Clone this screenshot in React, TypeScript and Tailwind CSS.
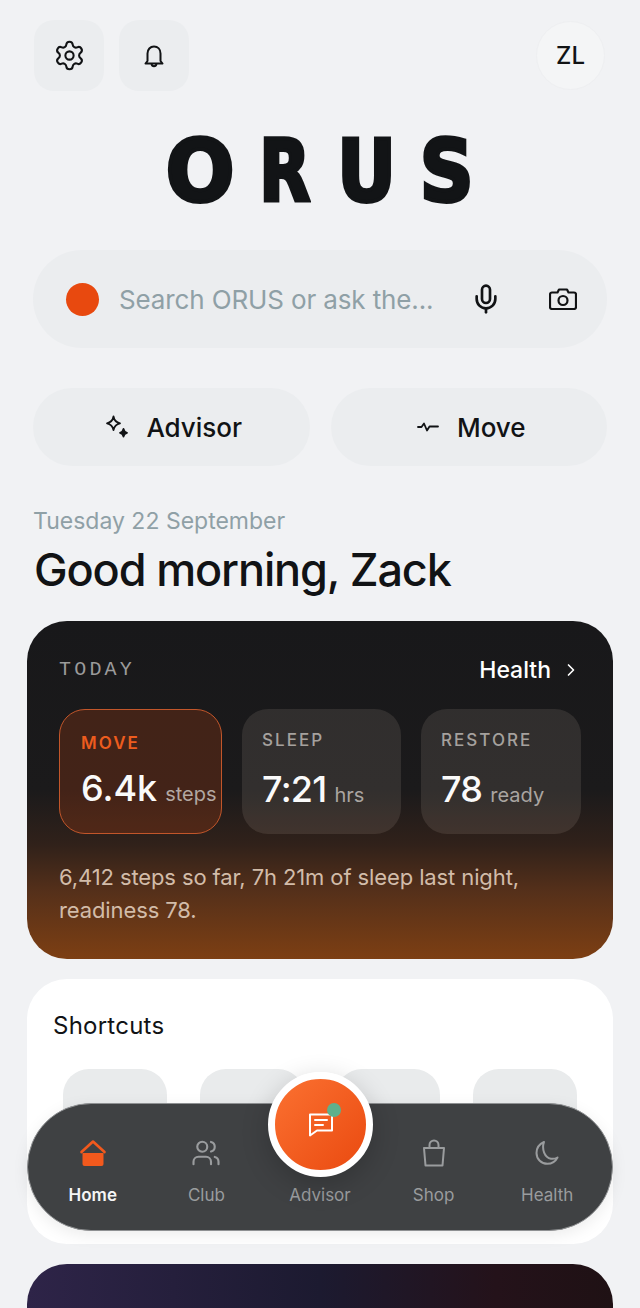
import { ChevronRight, Mic, Settings, Users } from "lucide-react";

const stats = [
  { label: "SLEEP", value: "7:21", unit: "hrs", width: "w-[159px]" },
  { label: "RESTORE", value: "78", unit: "ready", width: "w-[160px]" },
];

const SparkIcon = () => (
  <svg width="26" height="26" viewBox="0 0 26 26" fill="none" stroke="#111315" strokeWidth="1.8" strokeLinejoin="round">
    <path d="M9.500 2.500c.8 4.200 2.500 6 6.500 6.800-4 .8-5.700 2.600-6.500 6.800-.8-4.200-2.500-6-6.500-6.800 4-.8 5.700-2.600 6.500-6.800Z" />
    <path d="M19.500 15c.4 2.400 1.300 3.300 3.500 3.800-2.200.5-3.100 1.400-3.500 3.700-.4-2.300-1.300-3.200-3.500-3.700 2.200-.5 3.100-1.400 3.500-3.800Z" fill="#111315" />
  </svg>
);

const PulseIcon = () => (
  <svg width="24" height="24" viewBox="0 0 24 24" fill="none" stroke="#111315" strokeWidth="1.8" strokeLinecap="round" strokeLinejoin="round">
    <path d="M2 12h3.500L8 8.500l3 7 2.500-4H22" />
  </svg>
);

const BellIcon = () => (
  <svg width="26" height="26" viewBox="0 0 26 26" fill="none" stroke="#111315" strokeWidth="2" strokeLinejoin="round">
    <path d="M6.500 18V10.500C6.500 6.400 9.200 3.500 13 3.500s6.500 2.900 6.500 7V18l2 2.500h-17l2-2.500Z" />
    <path d="M10.500 21c.3 1.500 1.200 2.200 2.500 2.200s2.200-.7 2.500-2.200" />
  </svg>
);

const CameraIcon = () => (
  <svg width="28" height="22" viewBox="0 0 28 22" fill="none" stroke="#111315" strokeWidth="2.200" strokeLinejoin="round">
    <path d="M3 4.500h5.500L10 1.500h8l1.500 3H25a2 2 0 0 1 2 2V19a2 2 0 0 1-2 2H3a2 2 0 0 1-2-2V6.500a2 2 0 0 1 2-2Z" />
    <circle cx="14" cy="12.500" r="4.500" />
  </svg>
);

const HomeIcon = () => (
  <svg width="28" height="28" viewBox="0 0 28 28" fill="none">
    <path d="M2.500 13 14 2.500 25.500 13" stroke="#f2591d" strokeWidth="2.600" strokeLinejoin="round" strokeLinecap="round" />
    <path d="M3.500 14h21v11a2 2 0 0 1-2 2h-17a2 2 0 0 1-2-2V14Z" fill="#f2591d" />
  </svg>
);

const BagIcon = () => (
  <svg width="28" height="30" viewBox="0 0 28 30" fill="none" stroke="#9a9c9e" strokeWidth="2" strokeLinejoin="round">
    <path d="M4 10h20l-1.500 17.500h-17L4 10Z" />
    <path d="M9.500 10V7a4.500 4.500 0 0 1 9 0v3" />
  </svg>
);

const MoonIcon = () => (
  <svg width="28" height="28" viewBox="0 0 28 28" fill="none" stroke="#9a9c9e" strokeWidth="2" strokeLinejoin="round">
    <path d="M11 3C6.500 5 3.500 9 3.500 14c0 6.200 5 10.800 10.800 10.800 4.400 0 8.200-2.400 10.200-6.300-2 1.200-4.200 1.600-6.500 1.200C11.500 18.500 8.500 10 11 3Z" />
  </svg>
);

const ChatIcon = () => (
  <svg width="28" height="28" viewBox="0 0 28 28" fill="none" stroke="#fff" strokeWidth="2" strokeLinejoin="round" strokeLinecap="round">
    <path d="M3 3.500h22v16H10l-7 5v-21Z" />
    <path d="M8 9h12M8 14h8" />
  </svg>
);

const navItems = [
  { label: "Home", icon: <HomeIcon />, active: true },
  { label: "Club", icon: <Users size={30} strokeWidth={1.7} color="#9a9c9e" /> },
  { label: "Advisor", icon: null },
  { label: "Shop", icon: <BagIcon /> },
  { label: "Health", icon: <MoonIcon /> },
];

const logoLetters = [
  { letter: "O", box: "w-[66px]", glyph: "scale-x-[0.95]" },
  { letter: "R", box: "ml-[27px] w-[49px]", glyph: "scale-x-[0.78]" },
  { letter: "U", box: "ml-[31px] w-[53px]", glyph: "scale-x-[0.85]" },
  { letter: "S", box: "ml-[27px] w-[53px]", glyph: "scale-x-[0.88]" },
];

export default function App() {
  return (
    <div className="relative h-[1308px] w-[640px] overflow-hidden bg-[#f1f2f4] font-['Inter',sans-serif] text-[#111315]">
      <header className="flex items-center justify-between pl-[34px] pr-[35px] pt-[20px]">
        <div className="flex gap-[15px]">
          <button className="flex h-[71px] w-[70px] items-center justify-center rounded-[20px] bg-[#ebedef]">
            <Settings size={33} strokeWidth={1.5} />
          </button>
          <button className="flex h-[71px] w-[70px] items-center justify-center rounded-[20px] bg-[#ebedef]">
            <BellIcon />
          </button>
        </div>
        <div className="flex h-[69px] w-[69px] items-center justify-center rounded-full border border-[#eeeff1] bg-[#f4f5f6] text-[24px] font-medium">ZL</div>
      </header>

      <div className="mt-[40px] flex h-[80px] items-center justify-center font-['DejaVu_Sans',sans-serif] text-[85px] font-bold leading-none text-[#121416] [-webkit-text-stroke:4px_#121416]">
        {logoLetters.map(({ letter, box, glyph }) => (
          <span key={letter} className={`flex justify-center ${box}`}>
            <span className={`inline-block ${glyph}`}>{letter}</span>
          </span>
        ))}
      </div>

      <div className="mx-[33px] mt-[39px] flex h-[98px] items-center rounded-full bg-[#ebedef] pl-[33px] pr-[30px]">
        <span className="h-[33px] w-[33px] rounded-full bg-[#e8490f]" />
        <span className="ml-[20px] flex-1 text-[26px] tracking-[-0.005em] text-[#8fa0a6]">Search ORUS or ask the...</span>
        <Mic size={32} strokeWidth={2} />
        <span className="ml-[47px]">
          <CameraIcon />
        </span>
      </div>

      <div className="mx-[33px] mt-[40px] grid grid-cols-2 gap-[21px]">
        <button className="flex h-[78px] items-center justify-center gap-[16px] rounded-full bg-[#ebedef] pl-[4px] text-[26px] font-medium">
          <SparkIcon /> Advisor
        </button>
        <button className="flex h-[78px] items-center justify-center gap-[17px] rounded-full bg-[#ebedef] pl-[4px] text-[26px] font-medium">
          <PulseIcon /> Move
        </button>
      </div>

      <div className="mx-[33px] mt-[41px] text-[23px] leading-[28px] text-[#8fa0a6]">Tuesday 22 September</div>
      <h1 className="mx-[34px] mt-[7px] text-[45px] font-medium leading-[56px] tracking-[-0.025em]">Good morning, Zack</h1>

      <section className="mx-[27px] mt-[23px] h-[338px] rounded-[40px] bg-[linear-gradient(180deg,#18181a_0%,#1b1a1b_50%,#30211a_66%,#55301a_80%,#7d3f13_100%)] px-[32px] pt-[32px]">
        <div className="flex items-center justify-between">
          <span className="font-['Liberation_Mono',monospace] text-[20px] tracking-[0.16em] text-[#9b9b9b]">TODAY</span>
          <span className="flex items-center gap-[10px] text-[23px] font-medium text-white">
            Health <ChevronRight size={20} strokeWidth={2} />
          </span>
        </div>
        <div className="mt-[21px] flex gap-[20px]">
          <div className="h-[125px] w-[163px] rounded-[26px] border border-[#c2562a] bg-[#e8490f]/[0.2] pl-[21px] pt-[22px]">
            <div className="text-[17px] font-semibold leading-[22px] tracking-[0.12em] text-[#ed5c1e]">MOVE</div>
            <div className="mt-[12px] flex items-baseline whitespace-nowrap">
              <span className="text-[36px] font-medium leading-[44px] text-[#fafafa]">6.4k</span>
              <span className="ml-[8px] text-[20px] text-[#b3a8a2]">steps</span>
            </div>
          </div>
          {stats.map((stat) => (
            <div key={stat.label} className={`h-[125px] ${stat.width} rounded-[26px] bg-[#ffe8d8]/[0.1] pl-[20px] pt-[20px]`}>
              <div className="text-[17px] font-medium leading-[22px] tracking-[0.12em] text-[#a5a19e]">{stat.label}</div>
              <div className="mt-[16px] flex items-baseline whitespace-nowrap">
                <span className="text-[36px] font-medium leading-[44px] tracking-[-0.02em] text-[#fafafa]">{stat.value}</span>
                <span className="ml-[8px] text-[20px] text-[#aaa5a1]">{stat.unit}</span>
              </div>
            </div>
          ))}
        </div>
        <p className="mt-[27px] text-[22px] leading-[33px] tracking-[-0.005em] text-[#d2bca9]">
          6,412 steps so far, 7h 21m of sleep last night, readiness 78.
        </p>
      </section>

      <section className="mx-[27px] mt-[20px] h-[265px] rounded-[40px] bg-white px-[26px] pt-[30px]">
        <h2 className="text-[24px] leading-[34px] tracking-[0.01em]">Shortcuts</h2>
        <div className="mx-[10px] mt-[26px] flex justify-between">
          {[0, 1, 2, 3].map((i) => (
            <div key={i} className="h-[104px] w-[104px] rounded-[26px] bg-[#e9ebec]" />
          ))}
        </div>
      </section>

      <section className="mx-[27px] mt-[20px] h-[120px] rounded-t-[40px] bg-[linear-gradient(90deg,#2e2448_0%,#1c1a30_50%,#24121a_80%,#1f1114_100%)]" />

      <nav className="absolute left-[27px] top-[1103px] grid h-[128px] w-[586px] grid-cols-5 rounded-[64px] border border-[#8e9092] bg-[#3f4143] px-[8px] shadow-[0_4px_16px_rgba(0,0,0,0.08)]">
        {navItems.map((item) => (
          <div key={item.label} className="flex flex-col items-center pt-[32px]">
            <div className="flex h-[34px] items-center justify-center">{item.icon}</div>
            <span className={item.active ? "mt-[13px] text-[17px] font-semibold leading-[24px] text-[#f5f5f5]" : "mt-[13px] text-[17px] leading-[24px] text-[#9a9c9e]"}>
              {item.label}
            </span>
          </div>
        ))}
      </nav>

      <div className="absolute left-[268px] top-[1072px] flex h-[105px] w-[105px] items-center justify-center rounded-full border-[7px] border-white bg-[linear-gradient(135deg,#fb7131_0%,#ea4a10_100%)] shadow-[0_8px_28px_rgba(0,0,0,0.2)]">
        <ChatIcon />
        <span className="absolute right-[25px] top-[24px] h-[14px] w-[14px] rounded-full bg-[#5fb08c]" />
      </div>
    </div>
  );
}
